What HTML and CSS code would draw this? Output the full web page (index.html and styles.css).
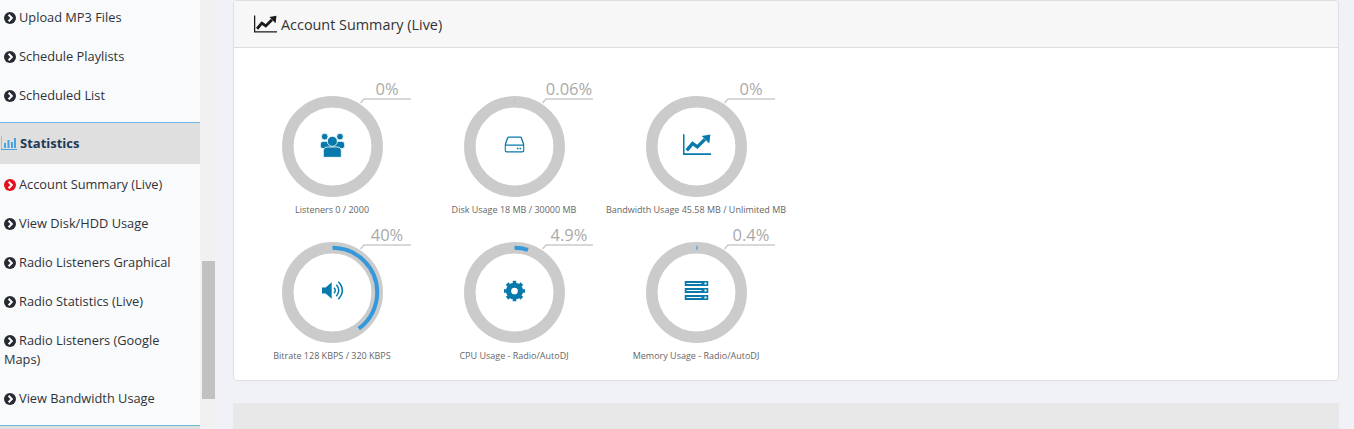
FILE: index.html
```html
<!DOCTYPE html>
<html lang="en">
<head>
    <meta charset="UTF-8">
    <title>Account Summary (Live)</title>
    <link rel="stylesheet" href="styles.css">
</head>
<body>

<svg class="defs" width="0" height="0">
    <symbol id="i-chevron" viewBox="0 0 12 12">
        <circle cx="6" cy="6" r="6" fill="currentColor"/>
        <path d="M4.6 2.8 7.8 6 4.6 9.2" fill="none" stroke="#fff" stroke-width="2"/>
    </symbol>
    <symbol id="i-bars" viewBox="0 0 16 14">
        <path d="M0 0v13.5h16" fill="none" stroke="currentColor"/>
        <path d="M3 7h2v5H3zM6.500 4h2v8h-2zM10 6h2v6h-2zM13 2h2v10h-2z" fill="currentColor"/>
    </symbol>
    <symbol id="i-chart" viewBox="0 0 82 60">
        <path d="M2 0v58h80" fill="none" stroke="currentColor" stroke-width="5"/>
        <path d="M11 47 28 27 42 37 64 15" fill="none" stroke="currentColor" stroke-width="10"/>
        <path d="M55 5 80 1 77 27z" fill="currentColor"/>
    </symbol>
    <symbol id="i-users" viewBox="0 0 75 75">
        <g fill="currentColor" stroke="#fff" stroke-width="2.500">
            <circle cx="14" cy="11" r="10"/>
            <circle cx="60" cy="11" r="10"/>
            <path d="M1 40V33q0-8 8-8h56q9 0 9 8v7q0 7-9 7H10q-9 0-9-7z"/>
            <circle cx="37" cy="25" r="15"/>
            <path d="M10 73V55q0-13 13-13h28q13 0 13 13v18z"/>
        </g>
    </symbol>
    <symbol id="i-drive" viewBox="0 0 60 50">
        <path d="M13 3h34q3 0 4 3l7 20v16q0 5-5 5H7q-5 0-5-5V26L9 6q1-3 4-3zM2 27h56" fill="none" stroke="currentColor" stroke-width="4"/>
        <path d="M37 35h5v4h-5zM45 35h5v4h-5z" fill="currentColor"/>
    </symbol>
    <symbol id="i-sound" viewBox="0 0 66 56">
        <path d="M0 19h11L29 3v50L11 37H0z" fill="currentColor"/>
        <g fill="none" stroke="currentColor" stroke-width="4.500">
            <path d="M36 20q8 8 0 16"/>
            <path d="M43 11q15 17 0 34"/>
            <path d="M49 2q24 26 0 52"/>
        </g>
    </symbol>
    <symbol id="i-cog" viewBox="0 0 20 20">
        <circle cx="10" cy="10" r="5.700" fill="none" stroke="currentColor" stroke-width="5"/>
        <circle cx="10" cy="10" r="8.400" fill="none" stroke="currentColor" stroke-width="3.200" pathLength="16" stroke-dasharray="1 1" stroke-dashoffset=".5"/>
    </symbol>
    <symbol id="i-server" viewBox="0 0 24 19">
        <path d="M0 0h24v5H0zM0 7h24v5H0zM0 14h24v5H0z" fill="currentColor"/>
        <path d="M2 2h15v1H2zM2 9h15v1H2zM2 16h15v1H2z" fill="#fff"/>
        <path d="M20 1.500h2v2h-2zM20 8.500h2v2h-2zM20 15.500h2v2h-2z" fill="#fff"/>
    </symbol>
</svg>

<div class="page">
    <div class="sidebar">
        <ul class="menu">
            <li><svg class="bullet"><use href="#i-chevron"/></svg>Upload MP3 Files</li>
            <li><svg class="bullet"><use href="#i-chevron"/></svg>Schedule Playlists</li>
            <li><svg class="bullet"><use href="#i-chevron"/></svg>Scheduled List</li>
        </ul>
        <div class="menu-head"><svg class="bars"><use href="#i-bars"/></svg>Statistics</div>
        <ul class="menu">
            <li><svg class="bullet active"><use href="#i-chevron"/></svg>Account Summary (Live)</li>
            <li><svg class="bullet"><use href="#i-chevron"/></svg>View Disk/HDD Usage</li>
            <li><svg class="bullet"><use href="#i-chevron"/></svg>Radio Listeners Graphical</li>
            <li><svg class="bullet"><use href="#i-chevron"/></svg>Radio Statistics (Live)</li>
            <li><svg class="bullet"><use href="#i-chevron"/></svg>Radio Listeners (Google Maps)</li>
            <li><svg class="bullet"><use href="#i-chevron"/></svg>View Bandwidth Usage</li>
        </ul>
        <div class="menu-head"></div>
    </div>

    <div class="scrollbar"><div class="thumb"></div></div>

    <div class="content">
        <div class="card">
            <div class="card-head">
                <svg class="head-icon"><use href="#i-chart"/></svg>
                Account Summary (Live)
            </div>
            <div class="gauges">
                <div class="gauge">
                    <div class="ring">
                        <svg class="dial" viewBox="0 0 101 101">
                            <circle class="track" cx="50.500" cy="50.500" r="44.700"/>
                            <path class="leader" d="M78.500 7 82 3h47"/>
                            <use class="icon" href="#i-users" x="38" y="37" width="25" height="25"/>
                        </svg>
                        <span class="percent">0%</span>
                    </div>
                    <p class="caption">Listeners 0 / 2000</p>
                </div>
                <div class="gauge">
                    <div class="ring">
                        <svg class="dial" viewBox="0 0 101 101">
                            <circle class="track" cx="50.500" cy="50.500" r="44.700"/>
                            <circle class="fill" cx="50.500" cy="50.500" r="44.700" pathLength="100" stroke-dasharray="0.06 100" transform="rotate(-90 50.500 50.500)"/>
                            <path class="leader" d="M78.500 7 82 3h47"/>
                            <use class="icon" href="#i-drive" x="40.500" y="40" width="20" height="17"/>
                        </svg>
                        <span class="percent">0.06%</span>
                    </div>
                    <p class="caption">Disk Usage 18 MB / 30000 MB</p>
                </div>
                <div class="gauge">
                    <div class="ring">
                        <svg class="dial" viewBox="0 0 101 101">
                            <circle class="track" cx="50.500" cy="50.500" r="44.700"/>
                            <path class="leader" d="M78.500 7 82 3h47"/>
                            <use class="icon" href="#i-chart" x="37" y="38" width="28" height="21"/>
                        </svg>
                        <span class="percent">0%</span>
                    </div>
                    <p class="caption">Bandwidth Usage 45.58 MB / Unlimited MB</p>
                </div>
                <div class="gauge">
                    <div class="ring">
                        <svg class="dial" viewBox="0 0 101 101">
                            <circle class="track" cx="50.500" cy="50.500" r="44.700"/>
                            <circle class="fill" cx="50.500" cy="50.500" r="44.700" pathLength="100" stroke-dasharray="40 100" transform="rotate(-90 50.500 50.500)"/>
                            <path class="leader" d="M78.500 7 82 3h47"/>
                            <use class="icon" href="#i-sound" x="40" y="39" width="22" height="19"/>
                        </svg>
                        <span class="percent">40%</span>
                    </div>
                    <p class="caption">Bitrate 128 KBPS / 320 KBPS</p>
                </div>
                <div class="gauge">
                    <div class="ring">
                        <svg class="dial" viewBox="0 0 101 101">
                            <circle class="track" cx="50.500" cy="50.500" r="44.700"/>
                            <circle class="fill" cx="50.500" cy="50.500" r="44.700" pathLength="100" stroke-dasharray="4.900 100" transform="rotate(-90 50.500 50.500)"/>
                            <path class="leader" d="M78.500 7 82 3h47"/>
                            <use class="icon" href="#i-cog" x="40" y="38.500" width="21" height="21"/>
                        </svg>
                        <span class="percent">4.9%</span>
                    </div>
                    <p class="caption">CPU Usage - Radio/AutoDJ</p>
                </div>
                <div class="gauge">
                    <div class="ring">
                        <svg class="dial" viewBox="0 0 101 101">
                            <circle class="track" cx="50.500" cy="50.500" r="44.700"/>
                            <circle class="fill" cx="50.500" cy="50.500" r="44.700" pathLength="100" stroke-dasharray="0.400 100" transform="rotate(-90 50.500 50.500)"/>
                            <path class="leader" d="M78.500 7 82 3h47"/>
                            <use class="icon" href="#i-server" x="38.500" y="39" width="24" height="19"/>
                        </svg>
                        <span class="percent">0.4%</span>
                    </div>
                    <p class="caption">Memory Usage - Radio/AutoDJ</p>
                </div>
            </div>
        </div>
        <div class="next-card"></div>
    </div>
</div>

</body>
</html>
```

FILE: styles.css
```css
html, body {
    height: 100%;
}
body {
    margin: 0;
    overflow: hidden;
    background-color: #f1f2f7;
    font-family: "Open Sans", "Noto Sans", sans-serif;
    color: #333;
}
.defs {
    display: block;
    height: 0;
}
.page {
    display: flex;
    height: 429px;
    overflow: hidden;
}

/* left menu */
.sidebar {
    width: 200px;
    flex-shrink: 0;
    background-color: #f9fafc;
}
.menu {
    list-style: none;
    margin: 1px 0 7px;
    padding: 0;
}
.menu:first-child {
    margin-top: -2px;
}
.menu li {
    padding: 10px 20px 10px 4px;
    font-size: 12.800px;
    line-height: 19px;
    color: #2f3338;
}
.bullet {
    width: 12px;
    height: 12px;
    margin-right: 3px;
    vertical-align: -1.500px;
    color: #262b33;
}
.bullet.active {
    color: #e3101c;
}
.menu-head {
    height: 39px;
    padding-bottom: 2px;
    border-top: 1px solid #6fb3e0;
    display: flex;
    align-items: center;
    background-color: #dfdfdf;
    font-size: 13px;
    font-weight: 700;
    color: #1e3a56;
}
.bars {
    width: 16px;
    height: 14px;
    margin: 0 3px 0 1px;
    color: #4aa3df;
}

.scrollbar {
    width: 16px;
    flex-shrink: 0;
    background-color: #f1f1f1;
}
.thumb {
    width: 13px;
    height: 138px;
    margin: 261px 0 0 2px;
    background-color: #c1c1c1;
}

/* main area */
.content {
    width: 1106px;
    margin-left: 17px;
}
.card {
    height: 381px;
    box-sizing: border-box;
    background: white;
    border: 1px solid #dedede;
    border-radius: 4px;
}
.card-head {
    height: 47px;
    box-sizing: border-box;
    display: flex;
    align-items: center;
    gap: 4px;
    padding-left: 20px;
    background-color: #f7f7f7;
    border-bottom: 1px solid #dedede;
    border-radius: 4px 4px 0 0;
    font-size: 14.400px;
    color: #333;
}
.head-icon {
    width: 23px;
    height: 18px;
    color: #1a1a1a;
}
.next-card {
    height: 60px;
    margin-top: 22px;
    background-color: #e8e8e8;
}
.gauges {
    display: grid;
    grid-template-columns: repeat(3, 182px);
    grid-auto-rows: 146px;
    padding: 48px 0 0 7px;
}
.gauge {
    display: flex;
    flex-direction: column;
    align-items: center;
}
.ring {
    position: relative;
    width: 101px;
    height: 101px;
}
.dial {
    display: block;
    width: 101px;
    height: 101px;
    overflow: visible;
}
.track {
    fill: none;
    stroke: #cbcbcb;
    stroke-width: 11.500;
}
.fill {
    fill: none;
    stroke: #3498db;
    stroke-width: 4;
}
.leader {
    fill: none;
    stroke: #cbcbcb;
    stroke-width: 1.500;
}
.icon {
    color: #0779ab;
}
.percent {
    position: absolute;
    left: 75px;
    top: -19px;
    width: 61px;
    text-align: center;
    font-size: 16.500px;
    line-height: 24px;
    color: #aaa;
    white-space: nowrap;
}
.caption {
    margin: 7px 0 0;
    font-size: 9px;
    line-height: 12px;
    color: #666;
    white-space: nowrap;
}
```
